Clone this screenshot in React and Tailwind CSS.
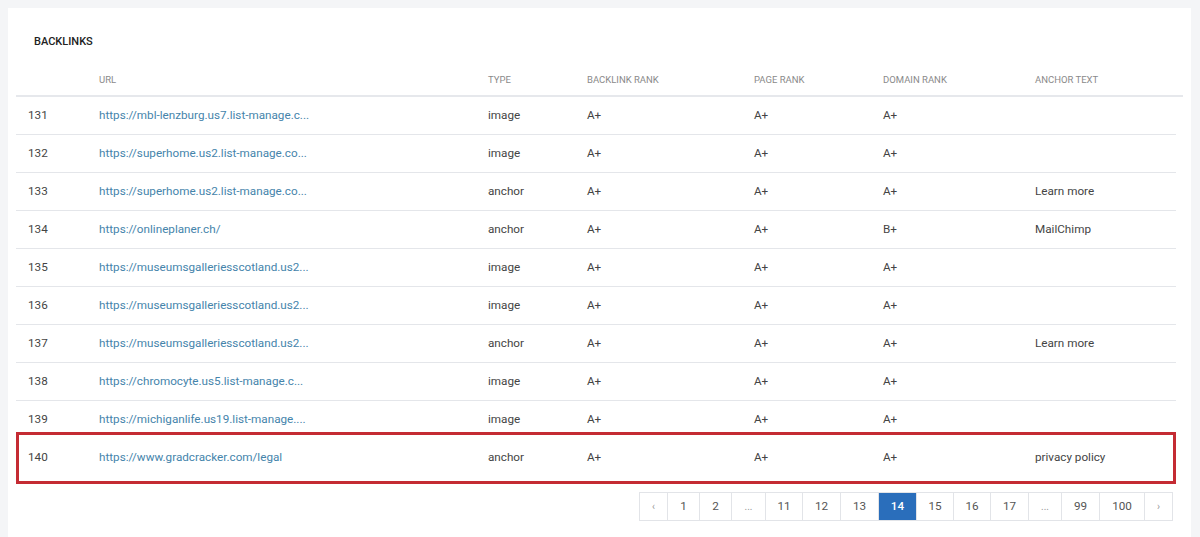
const rows = [
  ['131', 'https://mbl-lenzburg.us7.list-manage.c...', 'image', 'A+', 'A+', 'A+', ''],
  ['132', 'https://superhome.us2.list-manage.co...', 'image', 'A+', 'A+', 'A+', ''],
  ['133', 'https://superhome.us2.list-manage.co...', 'anchor', 'A+', 'A+', 'A+', 'Learn more'],
  ['134', 'https://onlineplaner.ch/', 'anchor', 'A+', 'A+', 'B+', 'MailChimp'],
  ['135', 'https://museumsgalleriesscotland.us2...', 'image', 'A+', 'A+', 'A+', ''],
  ['136', 'https://museumsgalleriesscotland.us2...', 'image', 'A+', 'A+', 'A+', ''],
  ['137', 'https://museumsgalleriesscotland.us2...', 'anchor', 'A+', 'A+', 'A+', 'Learn more'],
  ['138', 'https://chromocyte.us5.list-manage.c...', 'image', 'A+', 'A+', 'A+', ''],
  ['139', 'https://michiganlife.us19.list-manage....', 'image', 'A+', 'A+', 'A+', ''],
];

const cols = 'grid grid-cols-[83px_389px_99px_167px_129px_152px_1fr] items-center';
const pages = [
  ['‹', 'w-[29px]'], ['1', 'w-[33px]'], ['2', 'w-[33px]'], ['...', 'w-[35px]'],
  ['11', 'w-[38px]'], ['12', 'w-[39px]'], ['13', 'w-[39px]'], ['14', 'w-[39px]'],
  ['15', 'w-[38px]'], ['16', 'w-[38px]'], ['17', 'w-[39px]'], ['...', 'w-[34px]'],
  ['99', 'w-[39px]'], ['100', 'w-[46px]'], ['›', 'w-[29px]'],
];

function Row({ r }) {
  return (
    <div className={`${cols} h-[38px] border-b border-[#e4e6ea]`}>
      <div className="pl-3">{r[0]}</div>
      <div className="text-[#4584ab]">{r[1]}</div>
      <div>{r[2]}</div>
      <div>{r[3]}</div>
      <div>{r[4]}</div>
      <div>{r[5]}</div>
      <div>{r[6]}</div>
    </div>
  );
}

export default function App() {
  return (
    <div className="w-[1200px] h-[537px] bg-[#f4f5f7] pt-2 pl-2 overflow-hidden" style={{ fontFamily: 'Roboto, sans-serif' }}>
      <div className="bg-white w-[1183px] h-[540px] px-2 text-[11.7px] text-[#444]">
        <div className="pt-[26px] pl-[18px] text-[11px] font-medium text-[#222] h-[58px]">BACKLINKS</div>
        <div className={`${cols} h-[31px] border-b-2 border-[#e6e8ec] text-[9.5px] text-[#8a8a8a] pr-[7px]`}>
          <div></div><div>URL</div><div>TYPE</div><div>BACKLINK RANK</div><div>PAGE RANK</div><div>DOMAIN RANK</div><div>ANCHOR TEXT</div>
        </div>
        <div className="w-[1160px]">
          {rows.map(r => <Row key={r[0]} r={r} />)}
        </div>
        <div className={`${cols} relative bg-white w-[1160px] h-[52px] -mt-[7px] border-[3px] border-[#c42b33]`}>
          <div className="pl-[9px]">140</div>
          <div className="text-[#4584ab] -ml-[3px]">https://www.gradcracker.com/legal</div>
          <div className="-ml-[3px]">anchor</div>
          <div className="-ml-[3px]">A+</div>
          <div className="-ml-[3px]">A+</div>
          <div className="-ml-[3px]">A+</div>
          <div className="-ml-[3px]">privacy policy</div>
        </div>
        <div className="flex pl-[623px] mt-[8px]">
          {pages.map(([p, w], i) => (
            <div key={i} className={`${w} h-[29px] flex items-center justify-center border border-[#e2e4e8] -ml-px first:ml-0 ${p === '14' ? 'bg-[#2a6ebb] border-[#2a6ebb] text-white font-medium' : 'text-[#555]'} ${p === '‹' || p === '›' || p === '...' ? 'text-[#999] text-[10px]' : ''}`}>{p}</div>
          ))}
        </div>
      </div>
    </div>
  );
}
